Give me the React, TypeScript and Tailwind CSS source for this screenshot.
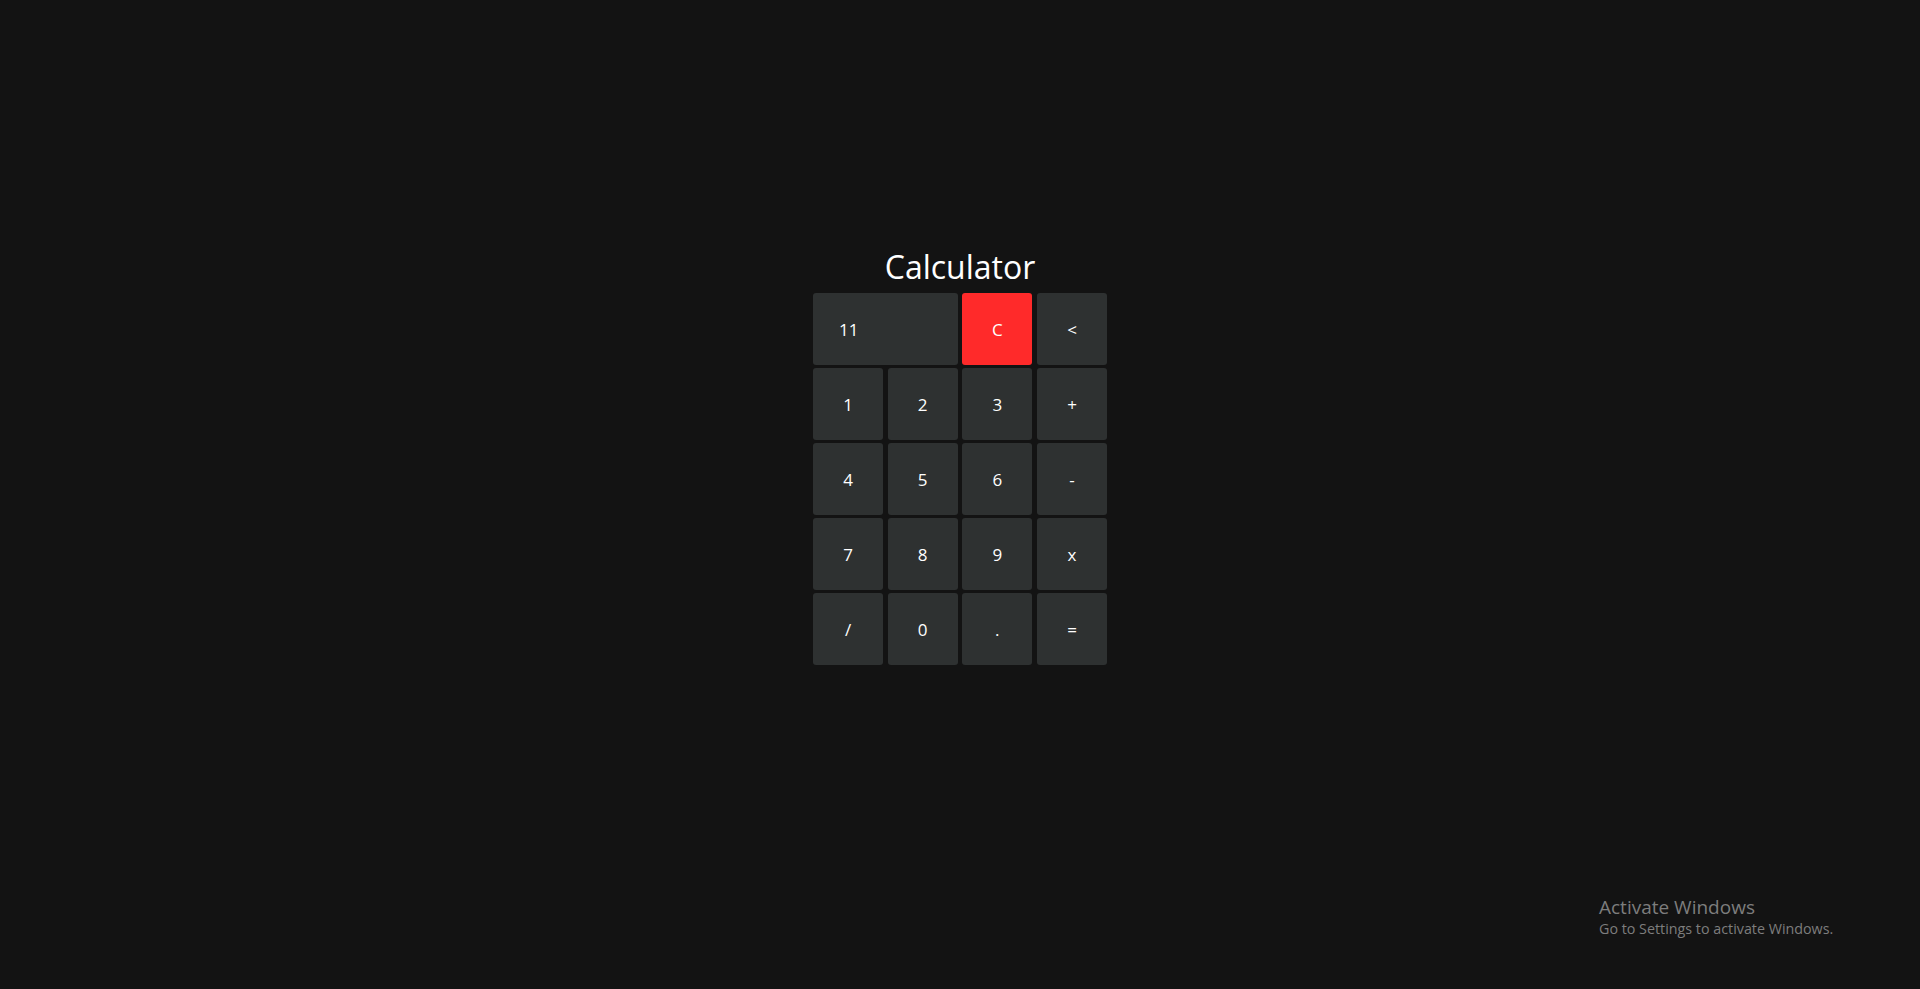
import React from "react";

const keys = ["1", "2", "3", "+", "4", "5", "6", "-", "7", "8", "9", "x", "/", "0", ".", "="];

const Key = ({ label, className = "" }: { label: string; className?: string }) => (
  <button
    className={`h-[71.5px] pt-[2px] rounded-[3px] bg-[#2e3131] text-[17px] font-medium text-white flex items-center justify-center ${className}`}
  >
    {label}
  </button>
);

export default function App() {
  return (
    <div
      className="relative min-h-screen bg-[#131313] flex flex-col items-center pt-[247px]"
      style={{ fontFamily: '"Open Sans", "Noto Sans", sans-serif' }}
    >
      <h1 className="text-[32px] leading-[40px] text-white mb-[6px]">Calculator</h1>

      <div className="w-[294px] grid grid-cols-4 gap-x-[4.67px] gap-y-[3.5px]">
        <div className="col-span-2 h-[71.5px] pt-[2px] rounded-[3px] bg-[#2e3131] text-[17px] font-medium text-white flex items-center pl-[26px]">
          11
        </div>
        <Key label="C" className="bg-[#ff2a2a]" />
        <Key label="<" />
        {keys.map((k) => (
          <Key key={k} label={k} />
        ))}
      </div>

      <div className="absolute left-[1599px] top-[896px] text-[#7d7d7d] leading-tight">
        <div className="text-[19px]">Activate Windows</div>
        <div className="text-[14.3px]">Go to Settings to activate Windows.</div>
      </div>
    </div>
  );
}
